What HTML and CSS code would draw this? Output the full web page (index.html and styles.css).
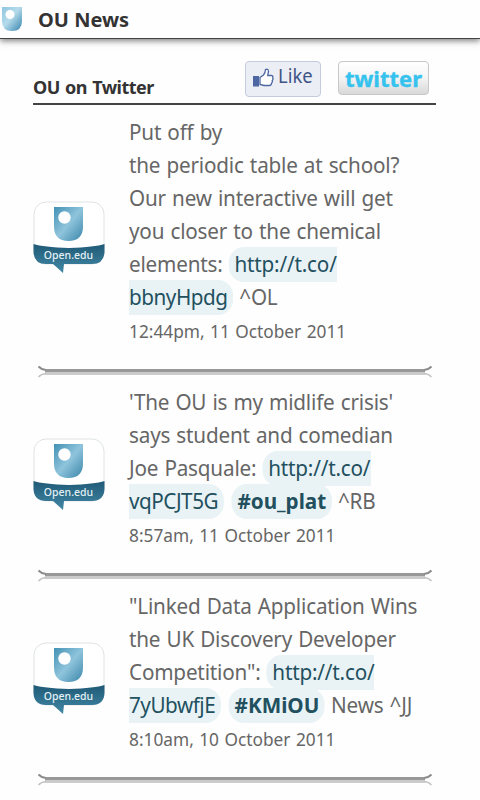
FILE: index.html
```html
<!DOCTYPE html>
<html lang="en">
<head>
    <meta charset="UTF-8">
    <meta name="viewport" content="width=device-width, initial-scale=1.0">
    <title>OU News</title>
    <link rel="stylesheet" href="styles.css">
</head>
<body>
    <svg class="defs" width="0" height="0">
        <defs>
            <linearGradient id="shield" x1="0" y1="0" x2="1" y2="1">
                <stop offset="0" stop-color="#8fc6df"/>
                <stop offset="0.45" stop-color="#b5dbeb"/>
                <stop offset="1" stop-color="#3584ae"/>
            </linearGradient>
            <linearGradient id="shieldDark" x1="0" y1="0" x2="1" y2="1">
                <stop offset="0" stop-color="#4391b4"/>
                <stop offset="0.5" stop-color="#8fc4dc"/>
                <stop offset="1" stop-color="#3a86a9"/>
            </linearGradient>
            <linearGradient id="band" x1="0" y1="0" x2="0" y2="1">
                <stop offset="0" stop-color="#1f5a76"/>
                <stop offset="1" stop-color="#4288a6"/>
            </linearGradient>
            <symbol id="avatar" viewBox="0 0 72 74">
                <rect x="1" y="1" width="70" height="62" rx="12" fill="#fff" stroke="#dfe3e5"/>
                <path d="M0.500 43Q10 46 36 47Q62 46 71.500 43V51Q71 63 59 63H31L30 72L20 63H13Q1 63 0.500 51Z" fill="url(#band)"/>
                <path d="M21 6H50V25Q50 40 35.500 40Q21 40 21 25Z" fill="url(#shieldDark)"/>
                <circle cx="31.500" cy="16.500" r="6.200" fill="#fff"/>
            </symbol>
            <symbol id="rule" viewBox="0 0 394 14">
                <path d="M7 4H387V7H7Z" fill="#989898"/>
                <path d="M7 7H387V10H7Z" fill="#cbcbcb"/>
                <path d="M0.500 1.500Q3 4.500 8 5M393.500 1.500Q391 4.500 386 5" fill="none" stroke="#8c8c8c" stroke-width="2"/>
                <path d="M0.500 12Q3 9 8 8.500M393.500 12Q391 9 386 8.500" fill="none" stroke="#c4c4c4" stroke-width="1.500"/>
            </symbol>
        </defs>
    </svg>

    <header class="header">
        <svg class="logo" width="20" height="24" viewBox="0 0 20 24">
            <path d="M0 0H20V14Q20 24 10 24Q0 24 0 14Z" fill="url(#shield)"/>
            <circle cx="8" cy="7.500" r="4.500" fill="#fff"/>
        </svg>
        <h1>OU News</h1>
    </header>

    <main class="feed">
        <div class="feed-header">
            <h2>OU on Twitter</h2>
            <div class="buttons">
                <a class="like">
                    <svg width="21" height="19" viewBox="0 0 21 19">
                        <rect x="0" y="8" width="6" height="10.500" fill="#4c67a1"/>
                        <path d="M7 9.500L10.500 7Q12.500 4.500 12.500 1.500Q15.500 0.500 15.500 3.500L14.700 7.500H18.500Q20.500 8 19.700 10Q20.500 11.500 19.200 12.700Q19.700 14.200 18.500 15.200Q18.300 17.500 16.300 17.500H11L7 16.500Z" fill="#fff" stroke="#4c67a1" stroke-width="1.300"/>
                    </svg>
                    <span>Like</span>
                </a>
                <a class="twitter"><span>twitter</span></a>
            </div>
        </div>

        <article class="tweet">
            <svg class="avatar" width="72" height="74"><use href="#avatar"/><text x="35.500" y="58">Open.edu</text></svg>
            <div class="tweet-body">
                <p>Put off by<br>
                the periodic table at school?<br>
                Our new interactive will get<br>
                you closer to the chemical<br>
                elements: <a class="link">http://t.co/<br><span class="slug">bbnyHpdg</span></a> ^OL</p>
                <div class="date">12:44pm, 11 October 2011</div>
            </div>
        </article>
        <svg class="rule" width="394" height="14"><use href="#rule"/></svg>

        <article class="tweet">
            <svg class="avatar" width="72" height="74"><use href="#avatar"/><text x="35.500" y="58">Open.edu</text></svg>
            <div class="tweet-body">
                <p>'The OU is my midlife crisis'<br>
                says student and comedian<br>
                Joe Pasquale: <a class="link">http://t.co/<br><span class="slug">vqPCJT5G</span></a> <a class="link tag">#ou_plat</a> ^RB</p>
                <div class="date">8:57am, 11 October 2011</div>
            </div>
        </article>
        <svg class="rule" width="394" height="14"><use href="#rule"/></svg>

        <article class="tweet">
            <svg class="avatar" width="72" height="74"><use href="#avatar"/><text x="35.500" y="58">Open.edu</text></svg>
            <div class="tweet-body">
                <p>"Linked Data Application Wins<br>
                the UK Discovery Developer<br>
                Competition": <a class="link">http://t.co/<br><span class="slug">7yUbwfjE</span></a> <a class="link tag">#KMiOU</a> News ^JJ</p>
                <div class="date">8:10am, 10 October 2011</div>
            </div>
        </article>
        <svg class="rule" width="394" height="14"><use href="#rule"/></svg>
    </main>
</body>
</html>
```
FILE: styles.css
```css
* {
    margin: 0;
    padding: 0;
    box-sizing: border-box;
}

body {
    height: 800px;
    overflow: hidden;
    background: #fefefe;
    color: #666;
    font-family: "Noto Sans", "Open Sans", sans-serif;
}

.defs {
    display: block;
}

.header {
    display: flex;
    align-items: center;
    height: 39px;
    padding-left: 2px;
    border-bottom: 1px solid #444;
    box-shadow: 0 2px 6px rgba(0,0,0,0.5);
}

.header h1 {
    margin-left: 16px;
    color: #333;
    font-size: 20px;
}

.feed {
    width: 403px;
    margin-left: 33px;
}

.feed-header {
    display: flex;
    justify-content: space-between;
    height: 66px;
    padding-top: 22px;
    border-bottom: 2px solid #444;
}

.feed-header h2 {
    margin-top: 14px;
    color: #333;
    font-size: 18px;
    line-height: 25px;
    letter-spacing: -0.5px;
    word-spacing: 1px;
}

.buttons {
    display: flex;
    gap: 17px;
    padding-right: 7px;
}

.like, .twitter {
    display: flex;
    align-items: center;
    border-radius: 4px;
}

.like {
    gap: 4px;
    width: 76px;
    height: 36px;
    padding-left: 7px;
    background: #eceef5;
    border: 1px solid #c3cbdd;
    color: #3f5486;
    font-size: 20px;
}

.like svg {
    margin-bottom: 3px;
}

.like span {
    line-height: 30px;
    margin-bottom: 6px;
    transform: scaleX(0.92);
    transform-origin: left;
}

.twitter {
    justify-content: center;
    width: 91px;
    height: 34px;
    background: linear-gradient(#fff, #f4f4f4 50%, #d8d8d8);
    border: 1px solid #c8c8c8;
    color: #35c3ee;
    font-size: 22px;
    font-weight: bold;
    line-height: 30px;
    -webkit-text-stroke: 0.4px #35c3ee;
}

.tweet {
    display: flex;
    align-items: center;
    gap: 24px;
    padding-top: 11px;
}

.rule + .tweet {
    padding-top: 7px;
}

.avatar {
    flex: none;
    display: block;
    margin-top: -1px;
}

.avatar text {
    fill: #e3f0f5;
    font-size: 10.5px;
    font-weight: 500;
    text-anchor: middle;
}

.tweet-body {
    padding-bottom: 12px;
    white-space: nowrap;
}

/* condensed a little so the lines stay inside the column */
.tweet p {
    margin: -1px 0 1px;
    font-size: 22px;
    line-height: 33px;
    letter-spacing: -0.2px;
    word-spacing: 1px;
    transform: scaleX(0.94);
    transform-origin: left;
}

.link {
    padding: 1px 6px 4px;
    border-radius: 16px;
    background: #e9f3f6;
    color: #22505e;
}

.slug {
    letter-spacing: -0.5px;
}

.tag {
    margin-left: 2px;
    font-weight: bold;
    letter-spacing: 0;
}

.date {
    font-size: 18px;
    line-height: 35px;
    word-spacing: 1px;
    transform: scaleX(0.96);
    transform-origin: left;
}

.rule {
    display: block;
    margin: 4px 0 0 5px;
}
```
